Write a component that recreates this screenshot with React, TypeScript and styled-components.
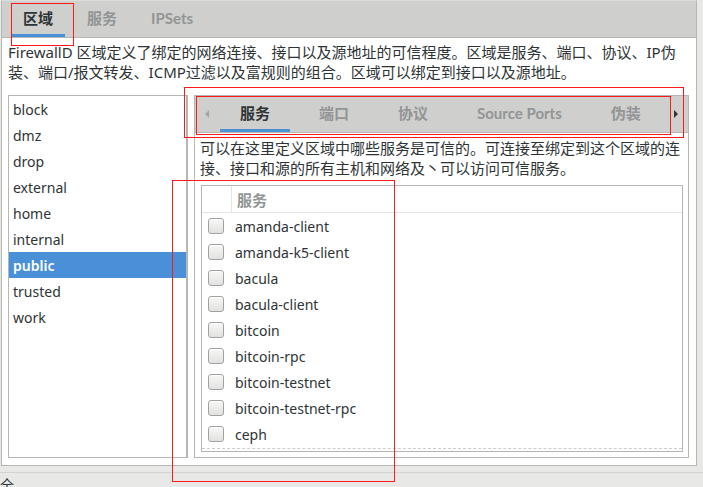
import styled, { createGlobalStyle, css } from 'styled-components'

const GlobalStyle = createGlobalStyle`
    html, body {
        margin: 0;
        padding: 0;
        background: #e8e8e7;
    }
    body {
        font-family: "Noto Sans", "Noto Sans CJK SC", sans-serif;
        color: #2e3436;
    }
`

const Root = styled.div`
    position: relative;
    width: 703px;
    height: 487px;
    overflow: hidden;
    padding-left: 1px;
    box-sizing: border-box;
    background: #e8e8e7;
`

const Notebook = styled.div`
    width: 696px;
    display: flex;
    flex-direction: column;
`

const TabBar = styled.div`
    height: 38px;
    box-sizing: border-box;
    display: flex;
    gap: 10px;
    padding-left: 9px;
    background: #cfcfcd;
    border: 1px solid #b6b6b3;
    border-top-color: #dcdcda;
`

const tabStyle = css<{ $active?: boolean }>`
    display: flex;
    align-items: center;
    box-sizing: border-box;
    font-family: Lato, "Noto Sans CJK SC", sans-serif;
    font-size: 15px;
    font-weight: 700;
    white-space: nowrap;
    border-bottom: 3px solid ${p => (p.$active ? '#4a90d9' : 'transparent')};
    color: ${p => (p.$active ? '#2e3436' : '#929595')};
`

const Tab = styled.div<{ $active?: boolean }>`
    ${tabStyle}
    padding: 0 12px;
`

const Page = styled.div`
    height: 428px;
    box-sizing: border-box;
    background: #ffffff;
    border: 1px solid #b6b6b3;
    border-top: none;
    padding: 4px 7px 7px 6px;
    display: flex;
    flex-direction: column;
`

const Description = styled.div`
    font-size: 15px;
    line-height: 20px;
    white-space: nowrap;
    color: #2e3436;
`

const Body = styled.div`
    margin-top: 13px;
    flex: 1;
    display: flex;
    gap: 6px;
    min-height: 0;
`

const ZoneList = styled.div`
    width: 180px;
    box-sizing: border-box;
    border: 1px solid #b6b6b3;
    border-right-width: 2px;
    background: #ffffff;
    display: flex;
    flex-direction: column;
`

const ZoneRow = styled.div<{ $selected?: boolean }>`
    height: 26px;
    display: flex;
    align-items: center;
    padding-left: 4px;
    font-size: 14px;
    background: ${p => (p.$selected ? '#4a90d9' : 'transparent')};
    color: ${p => (p.$selected ? '#ffffff' : '#2e3436')};
    font-weight: ${p => (p.$selected ? 600 : 400)};
`

const InnerNotebook = styled.div`
    flex: 1;
    box-sizing: border-box;
    border: 1px solid #b6b6b3;
    display: flex;
    flex-direction: column;
    min-width: 0;
`

const InnerTabBar = styled.div`
    height: 37px;
    box-sizing: border-box;
    background: #cfcfcd;
    border-bottom: 1px solid #b6b6b3;
    display: flex;
    align-items: stretch;
`

const ScrollArrow = styled.div<{ $dir: 'left' | 'right' }>`
    width: 24px;
    flex: none;
    display: flex;
    align-items: center;
    justify-content: center;
    &::before {
        content: '';
        width: 0;
        height: 0;
        border-top: 4px solid transparent;
        border-bottom: 4px solid transparent;
        ${p => (p.$dir === 'left'
            ? 'border-right: 4px solid #a4a6a6;'
            : 'border-left: 4px solid #2e3436;')}
    }
`

const InnerTabs = styled.div`
    flex: 1;
    display: flex;
    gap: 9px;
    overflow: hidden;
    padding-left: 1px;
`

const InnerTab = styled.div<{ $active?: boolean }>`
    ${tabStyle}
    padding: 0 20px;
`

const InnerPage = styled.div`
    flex: 1;
    background: #ffffff;
    padding: 5px 5px 5px 6px;
    display: flex;
    flex-direction: column;
    min-height: 0;
`

const InnerDescription = styled.div`
    font-size: 15px;
    line-height: 20px;
    white-space: nowrap;
    margin-left: -1px;
`

const ServiceTable = styled.div`
    margin-top: 7px;
    flex: 1;
    border: 1px solid #b6b6b3;
    display: flex;
    flex-direction: column;
    min-height: 0;
`

const HeaderRow = styled.div`
    height: 26px;
    flex: none;
    display: flex;
    border-bottom: 1px solid #e4e4e2;
`

const HeaderCheckCell = styled.div`
    width: 29px;
    border-right: 1px solid #e4e4e2;
`

const HeaderCell = styled.div`
    display: flex;
    align-items: center;
    padding-left: 5px;
    font-size: 15px;
    font-weight: 700;
    color: #929595;
`

const TableBody = styled.div`
    flex: 1;
    overflow: hidden;
`

const ServiceRow = styled.div`
    height: 26px;
    display: flex;
    align-items: center;
    padding-left: 6px;
    gap: 11px;
    font-size: 14px;
`

const CheckBox = styled.span`
    width: 16px;
    height: 16px;
    box-sizing: border-box;
    border: 1px solid #a1a1a1;
    border-radius: 3px;
    background: linear-gradient(#f7f7f6, #e2e2e0);
    box-shadow: inset 0 1px #ffffff;
`

const TableFoot = styled.div`
    flex: none;
    margin: 0 0 2px;
    border-top: 1px dashed #cdcdcb;
`

const StatusBar = styled.div`
    margin-top: 6px;
    margin-left: -1px;
    border-top: 1px solid #d3d3d1;
    padding-top: 3px;
    font-size: 14px;
    line-height: 18px;
`

const Annotation = styled.div<{ $x: number; $y: number; $w: number; $h: number }>`
    position: absolute;
    left: ${p => p.$x}px;
    top: ${p => p.$y}px;
    width: ${p => p.$w}px;
    height: ${p => p.$h}px;
    box-sizing: border-box;
    border: 1px solid #ff1a1a;
    pointer-events: none;
`

const zones = ['block', 'dmz', 'drop', 'external', 'home', 'internal', 'public', 'trusted', 'work']

const services = [
    'amanda-client',
    'amanda-k5-client',
    'bacula',
    'bacula-client',
    'bitcoin',
    'bitcoin-rpc',
    'bitcoin-testnet',
    'bitcoin-testnet-rpc',
    'ceph'
]

const innerTabs = ['服务', '端口', '协议', 'Source Ports', '伪装']

// 截图上的红色标注框
const marks = [
    { x: 11, y: 3, w: 63, h: 43 },
    { x: 184, y: 87, w: 500, h: 51 },
    { x: 196, y: 96, w: 475, h: 39 },
    { x: 172, y: 180, w: 223, h: 302 }
]

const App = () => {
    return (
        <Root>
            <GlobalStyle />
            <Notebook>
                <TabBar>
                    <Tab $active>区域</Tab>
                    <Tab>服务</Tab>
                    <Tab>IPSets</Tab>
                </TabBar>
                <Page>
                    <Description>
                        FirewallD 区域定义了绑定的网络连接、接口以及源地址的可信程度。区域是服务、端口、协议、IP伪
                        <br />
                        装、端口/报文转发、ICMP过滤以及富规则的组合。区域可以绑定到接口以及源地址。
                    </Description>
                    <Body>
                        <ZoneList>
                            {zones.map(z => (
                                <ZoneRow key={z} $selected={z === 'public'}>{z}</ZoneRow>
                            ))}
                        </ZoneList>
                        <InnerNotebook>
                            <InnerTabBar>
                                <ScrollArrow $dir='left' />
                                <InnerTabs>
                                    {innerTabs.map((t, i) => (
                                        <InnerTab key={t} $active={i === 0}>{t}</InnerTab>
                                    ))}
                                </InnerTabs>
                                <ScrollArrow $dir='right' />
                            </InnerTabBar>
                            <InnerPage>
                                <InnerDescription>
                                    可以在这里定义区域中哪些服务是可信的。可连接至绑定到这个区域的连
                                    <br />
                                    接、接口和源的所有主机和网络及丶可以访问可信服务。
                                </InnerDescription>
                                <ServiceTable>
                                    <HeaderRow>
                                        <HeaderCheckCell />
                                        <HeaderCell>服务</HeaderCell>
                                    </HeaderRow>
                                    <TableBody>
                                        {services.map(s => (
                                            <ServiceRow key={s}>
                                                <CheckBox />
                                                {s}
                                            </ServiceRow>
                                        ))}
                                    </TableBody>
                                    <TableFoot />
                                </ServiceTable>
                            </InnerPage>
                        </InnerNotebook>
                    </Body>
                </Page>
            </Notebook>
            <StatusBar>全</StatusBar>
            {marks.map((m, i) => (
                <Annotation key={i} $x={m.x} $y={m.y} $w={m.w} $h={m.h} />
            ))}
        </Root>
    )
}

export default App
